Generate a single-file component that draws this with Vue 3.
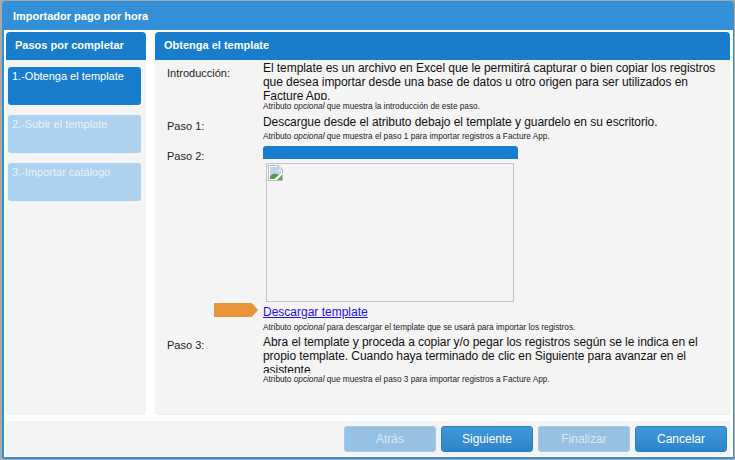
<template>
  <div class="page">
    <div class="dialog">
      <div class="title">Importador pago por hora</div>
      <div class="body">
        <aside class="steps">
          <div class="panel-head">Pasos por completar</div>
          <div class="step-list">
            <div v-for="(s, i) in steps" :key="s" class="step" :class="{ active: i === 0 }">{{ s }}</div>
          </div>
        </aside>
        <main class="content">
          <div class="panel-head">Obtenga el template</div>
          <div class="rows">
            <div class="label label-intro">Introducción:</div>
            <div class="field">
              <p class="text clip">El template es un archivo en Excel que le permitirá capturar o bien copiar los registros que desea importar desde una base de datos u otro origen para ser utilizados en Facture App.</p>
              <p class="hint hint-intro">Atributo <em>opcional</em> que muestra la introducción de este paso.</p>
            </div>

            <div class="label label-1">Paso 1:</div>
            <div class="field">
              <p class="text">Descargue desde el atributo debajo el template y guardelo en su escritorio.</p>
              <p class="hint hint-1">Atributo <em>opcional</em> que muestra el paso 1 para importar registros a Facture App.</p>
            </div>

            <div class="label label-2">Paso 2:</div>
            <div class="field">
              <div class="blue-bar"></div>
              <div class="preview">
                <svg class="broken" width="16" height="16" viewBox="0 0 16 16">
                  <path d="M.5.5h10l4 4v11H.5z" fill="#fff" stroke="#b9b9b9" />
                  <path d="M10.5.5v4h4" fill="#eee" stroke="#b9b9b9" />
                  <path d="M2 2h8v4h3v3l-2 1C8 7.500 5 8 2 11z" fill="#bfd3ee" />
                  <path d="M2 14v-3c3-3 6-3.500 9-1l-5 4z" fill="#4f9e45" />
                  <path d="M9 15l5-5v5z" fill="#5aa84f" />
                </svg>
              </div>
              <div class="download">
                <span class="arrow"></span>
                <a class="link" href="#">Descargar template</a>
              </div>
              <p class="hint hint-2">Atributo <em>opcional</em> para descargar el template que se usará para importar los registros.</p>
            </div>

            <div class="label label-3">Paso 3:</div>
            <div class="field">
              <p class="text clip clip-3">Abra el template y proceda a copiar y/o pegar los registros según se le indica en el propio template. Cuando haya terminado de clic en Siguiente para avanzar en el asistente</p>
              <p class="hint hint-3">Atributo <em>opcional</em> que muestra el paso 3 para importar registros a Facture App.</p>
            </div>
          </div>
        </main>
      </div>
      <footer class="footer">
        <button v-for="b in buttons" :key="b.text" class="btn" :class="{ off: b.off }">{{ b.text }}</button>
      </footer>
    </div>
  </div>
</template>

<script setup>
const steps = ['1.-Obtenga el template', '2.-Subir el template', '3.-Importar catálogo']
const buttons = [
  { text: 'Atrás', off: true },
  { text: 'Siguiente', off: false },
  { text: 'Finalizar', off: true },
  { text: 'Cancelar', off: false }
]
</script>

<style>
html, body {
  margin: 0;
  background: #a9a9a9;
}
</style>

<style scoped>
.page {
  width: 735px;
  height: 460px;
  padding: 1px 1px 1px 2px;
  box-sizing: border-box;
  font-family: "Liberation Sans", Arial, sans-serif;
  overflow: hidden;
  background: #a9a9a9;
}

.dialog {
  height: 100%;
  box-sizing: border-box;
  display: flex;
  flex-direction: column;
  background: #338fd6;
  border-radius: 4px 4px 2px 2px;
  padding: 0 1px 2px 2px;
}

.title {
  height: 29px;
  flex: none;
  padding: 3px 0 0 9px;
  box-sizing: border-box;
  line-height: 24px;
  font-size: 11px;
  font-weight: 700;
  color: #fff;
}

.body {
  flex: 1;
  min-height: 0;
  background: #fff;
  display: flex;
  gap: 9px;
  padding: 2px 3px 6px 2px;
}

.steps,
.content {
  background: #f4f4f4;
  border-radius: 4px;
  display: flex;
  flex-direction: column;
  overflow: hidden;
}

.steps {
  width: 140px;
  flex: none;
}

.content {
  flex: 1;
  min-width: 0;
  border-bottom: 1px solid #e9e9e9;
}

.panel-head {
  height: 28px;
  flex: none;
  background: #177dcc;
  color: #fff;
  font-size: 11px;
  font-weight: 700;
  line-height: 27px;
  padding-left: 9px;
}

.step-list {
  display: flex;
  flex-direction: column;
  gap: 10px;
  padding: 7px 5px 0 2px;
}

.step {
  height: 38px;
  border-radius: 3px;
  background: #acd2ef;
  color: #e8f2fb;
  font-size: 11px;
  padding: 2px 0 0 4px;
  box-sizing: border-box;
  line-height: 14px;
}

.step.active {
  background: #177dcc;
  color: #fff;
}

.rows {
  display: grid;
  grid-template-columns: 96px 1fr;
  padding-left: 12px;
}

.label {
  font-size: 11px;
  line-height: 14px;
  color: #222;
}

.label-intro {
  padding-top: 6px;
}

.label-1 {
  padding-top: 5px;
}

.label-2 {
  padding-top: 3px;
}

.label-3 {
  padding-top: 4px;
}

.field {
  min-width: 0;
}

.text {
  margin: 0;
  width: 460px;
  padding-top: 1px;
  font-size: 12px;
  line-height: 14px;
  letter-spacing: -0.06px;
  color: #111;
}

.clip {
  height: 40px;
  box-sizing: border-box;
  overflow: hidden;
}

.clip-3 {
  height: 39px;
}

.hint {
  margin: 0;
  font-size: 8.25px;
  line-height: 10px;
  color: #1c1c1c;
}

.hint-intro {
  padding: 2px 0;
}

.hint-1 {
  padding: 3px 0 4px;
}

.hint-2 {
  padding: 5px 0 1px;
}

.hint-3 {
  padding-top: 2px;
}

.blue-bar {
  width: 255px;
  height: 13px;
  background: #177dcc;
  border-radius: 3px 3px 0 0;
}

.preview {
  width: 248px;
  height: 139px;
  box-sizing: border-box;
  margin: 4px 0 0 3px;
  border: 1px solid #c4c4c4;
  position: relative;
}

.broken {
  position: absolute;
  left: 1px;
  top: 1px;
}

.download {
  height: 16px;
  position: relative;
}

.arrow {
  position: absolute;
  left: -49px;
  top: 1px;
  width: 44px;
  height: 14px;
  background: #e9933a;
  clip-path: polygon(0 0, 86% 0, 100% 50%, 86% 100%, 0 100%);
}

.link {
  color: #1a10e8;
  font-size: 12px;
  line-height: 16px;
}

.footer {
  height: 36px;
  flex: none;
  box-sizing: border-box;
  background: #f4f4f4;
  border-left: 2px solid #fff;
  border-right: 3px solid #fff;
  border-bottom: 1px solid #fff;
  display: flex;
  justify-content: flex-end;
  align-items: center;
  gap: 5px;
  padding-right: 3px;
}

.btn {
  width: 92px;
  height: 26px;
  box-sizing: border-box;
  border: 1px solid #2b7ec0;
  border-radius: 3px;
  background: linear-gradient(#3f98da, #2f84c8);
  color: #fff;
  font-family: inherit;
  font-size: 12px;
  padding: 0;
}

.btn.off {
  background: #97c1e3;
  border-color: #a6cbe8;
  color: #d8e8f5;
}
</style>
